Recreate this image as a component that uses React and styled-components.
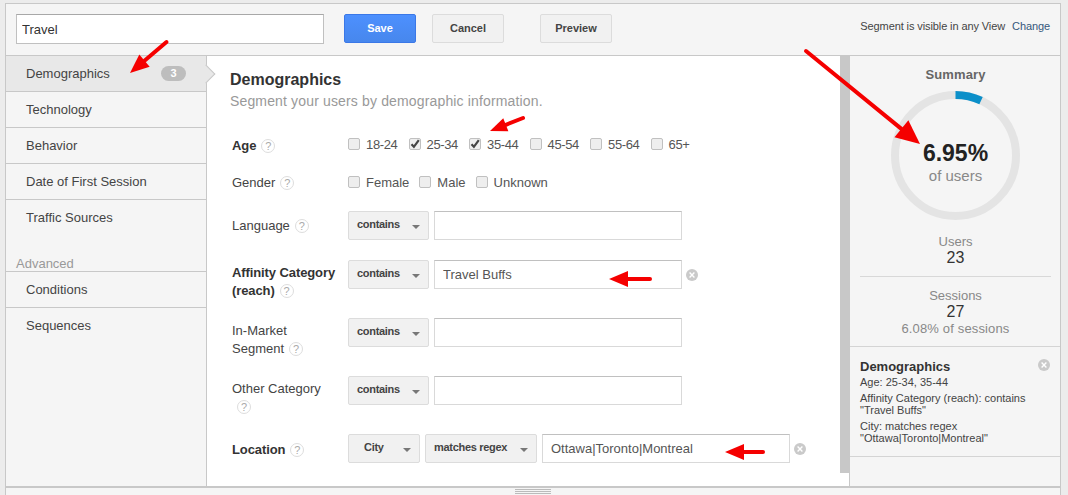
import React from 'react';
import styled, { createGlobalStyle } from 'styled-components';

const GlobalStyle = createGlobalStyle`
  html, body {
    margin: 0;
    padding: 0;
    background: #ececec;
    font-family: 'Liberation Sans', Arial, sans-serif;
    color: #444;
    overflow: hidden;
  }
`;

const Page = styled.div`
  position: relative;
  width: 1068px;
  height: 495px;
  padding: 3px 7px 0 5px;
  box-sizing: border-box;
`;

const Panel = styled.div`
  width: 1056px;
  height: 492px;
  box-sizing: border-box;
  border: solid #c8c8c8;
  border-width: 1px 1px 0 1px;
  background: #f5f5f5;
  display: flex;
  flex-direction: column;
`;

const TopBar = styled.div`
  height: 52px;
  flex: none;
  box-sizing: border-box;
  border-bottom: 1px solid #c8c8c8;
  padding: 10px 10px 0 10px;
  display: flex;
  align-items: flex-start;
`;

const NameInput = styled.input`
  width: 308px;
  height: 30px;
  box-sizing: border-box;
  border: 1px solid #c0c0c0;
  border-top-color: #a8a8a8;
  padding: 0 5px;
  font: 13px 'Liberation Sans', Arial, sans-serif;
  color: #333;
  background: #fff;
  outline: none;
`;

const Button = styled.button`
  width: 72px;
  height: 29px;
  margin-left: ${(p) => p.$left}px;
  box-sizing: border-box;
  border-radius: 2px;
  border: 1px solid ${(p) => (p.$primary ? '#3b78e7' : '#dcdcdc')};
  background: ${(p) => (p.$primary ? 'linear-gradient(#4d90fe, #4787ed)' : '#f1f1f1')};
  color: ${(p) => (p.$primary ? '#fff' : '#444')};
  font: bold 11px 'Liberation Sans', Arial, sans-serif;
  padding: 0 0 2px;
`;

const Visibility = styled.div`
  margin-left: auto;
  padding-top: 6px;
  font-size: 11px;
  line-height: 13px;
  letter-spacing: -0.1px;
  color: #444;
  display: flex;
  gap: 7px;
`;

const ChangeLink = styled.span`
  color: #35587c;
`;

const Body = styled.div`
  flex: 1;
  min-height: 0;
  display: flex;
`;

const Sidebar = styled.nav`
  width: 201px;
  flex: none;
  box-sizing: border-box;
  border-right: 1px solid #c8c8c8;
`;

const NavItem = styled.div`
  position: relative;
  height: 36px;
  box-sizing: border-box;
  padding-left: 20px;
  font-size: 13px;
  line-height: 35px;
  color: #444;
  background: ${(p) => (p.$active ? '#e8e8e8' : 'transparent')};
  border-bottom: ${(p) => (p.$last ? 'none' : '1px solid #c8c8c8')};
`;

const Badge = styled.span`
  position: absolute;
  right: 20px;
  top: 10px;
  width: 25px;
  height: 15px;
  border-radius: 8px;
  background: #bdbdbd;
  color: #fff;
  font-size: 11px;
  font-weight: bold;
  line-height: 15px;
  text-align: center;
`;

const Pointer = styled.span`
  position: absolute;
  right: -7px;
  top: 11px;
  width: 13px;
  height: 13px;
  background: #e8e8e8;
  border: solid #c8c8c8;
  border-width: 1px 1px 0 0;
  transform: rotate(45deg) scale(0.95);
  z-index: 2;
`;

const NavHeading = styled.div`
  margin-top: 19px;
  height: 17px;
  box-sizing: border-box;
  padding-left: 10px;
  font-size: 13px;
  line-height: 17px;
  color: #999;
  border-bottom: 1px solid #c8c8c8;
`;

const Main = styled.main`
  position: relative;
  flex: 1;
  min-width: 0;
  background: #fff;
  padding: 14px 0 0 23px;
`;

const Thumb = styled.div`
  position: absolute;
  top: 0;
  right: 0;
  width: 9px;
  height: 417px;
  background: #c8c8c8;
`;

const Title = styled.h2`
  margin: 0;
  font-size: 16px;
  line-height: 20px;
  font-weight: bold;
  color: #333;
`;

const Subtitle = styled.p`
  margin: 2px 0 0;
  font-size: 14px;
  line-height: 18px;
  letter-spacing: 0.15px;
  color: #999;
`;

const Row = styled.div`
  display: flex;
  align-items: ${(p) => (p.$top ? 'flex-start' : 'center')};
  height: ${(p) => p.$height}px;
  margin-top: ${(p) => p.$gap}px;
`;

const Label = styled.div`
  width: 119px;
  flex: none;
  box-sizing: border-box;
  padding: ${(p) => p.$pad || 0}px 8px 0 2px;
  font-size: 13px;
  line-height: 18px;
  font-weight: ${(p) => (p.$bold ? 'bold' : 'normal')};
  letter-spacing: ${(p) => (p.$bold ? '-0.1px' : '0')};
  color: ${(p) => (p.$bold ? '#333' : '#444')};
`;

const Help = styled.span`
  display: inline-block;
  width: 12px;
  height: 12px;
  margin-left: 5px;
  border: 1px solid #ddd;
  border-radius: 50%;
  color: #aaa;
  font-size: 11px;
  font-weight: normal;
  line-height: 12px;
  letter-spacing: 0;
  text-align: center;
  vertical-align: 0;
`;

const Checks = styled.div`
  display: flex;
  gap: ${(p) => p.$gap}px;
  margin-left: -1px;
`;

const Check = styled.label`
  display: flex;
  align-items: center;
  gap: ${(p) => p.$gap}px;
  font-size: 13px;
  line-height: 16px;
  letter-spacing: ${(p) => (p.$tight ? '-0.35px' : '0')};
  color: #555;
`;

const Box = styled.span`
  width: 12px;
  height: 12px;
  box-sizing: border-box;
  margin-top: -2px;
  border: 1px solid #c0c0c0;
  border-radius: 2px;
  background: #eee;
  display: flex;
  align-items: center;
  justify-content: center;
`;

const Controls = styled.div`
  display: flex;
  align-items: center;
  gap: 5px;
`;

const Select = styled.div`
  position: relative;
  width: ${(p) => p.$width}px;
  height: 29px;
  box-sizing: border-box;
  border: 1px solid #dcdcdc;
  border-radius: 2px;
  background: #f1f1f1;
  padding-left: ${(p) => p.$pad}px;
  font-size: 11px;
  font-weight: bold;
  line-height: 24px;
  letter-spacing: -0.3px;
  color: #444;
  margin-left: -1px;
  & + & { margin-left: 0; }
  &::after {
    content: '';
    position: absolute;
    right: 8px;
    top: 13px;
    border: solid transparent;
    border-width: 4px 4px 0;
    border-top-color: #777;
  }
`;

const TextField = styled.input`
  width: 248px;
  height: 29px;
  box-sizing: border-box;
  border: 1px solid #d9d9d9;
  border-top-color: #c0c0c0;
  padding: 0 8px;
  font: 13px 'Liberation Sans', Arial, sans-serif;
  color: #555;
  background: #fff;
  outline: none;
`;

const Clear = styled.svg`
  width: 12px;
  height: 12px;
  flex: none;
  margin-left: -1px;
`;

const Summary = styled.aside`
  width: 211px;
  flex: none;
  box-sizing: border-box;
  border-left: 1px solid #c8c8c8;
  display: flex;
  flex-direction: column;
`;

const SummaryTop = styled.div`
  height: 291px;
  flex: none;
  box-sizing: border-box;
  border-bottom: 1px solid #d4d4d4;
  padding: 10px 9px 0 10px;
  text-align: center;
`;

const SummaryTitle = styled.div`
  font-size: 13px;
  line-height: 17px;
  letter-spacing: 0.1px;
  font-weight: bold;
  color: #666;
`;

const Ring = styled.div`
  position: relative;
  width: 129px;
  height: 129px;
  margin: 8px auto 0;
`;

const RingText = styled.div`
  position: absolute;
  inset: 0;
  padding-top: 14px;
  display: flex;
  flex-direction: column;
  align-items: center;
  justify-content: center;
`;

const Percent = styled.div`
  font-size: 23px;
  line-height: 26px;
  font-weight: bold;
  color: #222;
`;

const OfUsers = styled.div`
  font-size: 15px;
  line-height: 18px;
  color: #888;
  margin-top: 1px;
`;

const Stat = styled.div`
  padding: ${(p) => p.$pad};
  border-bottom: ${(p) => (p.$divider ? '1px solid #d8d8d8' : 'none')};
`;

const StatLabel = styled.div`
  font-size: 13px;
  line-height: 14px;
  color: #888;
`;

const StatNote = styled(StatLabel)`
  margin-top: 2px;
  letter-spacing: 0.15px;
`;

const StatValue = styled.div`
  font-size: 16px;
  line-height: 17px;
  color: #333;
`;

const Card = styled.div`
  position: relative;
  height: 110px;
  flex: none;
  box-sizing: border-box;
  border-bottom: 1px solid #d4d4d4;
  padding: 12px 10px 0;
`;

const CardTitle = styled.div`
  font-size: 13px;
  line-height: 16px;
  font-weight: bold;
  color: #333;
`;

const CardLine = styled.div`
  font-size: 11px;
  line-height: 12px;
  color: #444;
  margin-top: ${(p) => p.$gap}px;
`;

const CardClear = styled.svg`
  position: absolute;
  right: 10px;
  top: 12px;
  width: 12px;
  height: 12px;
`;

const Footer = styled.div`
  height: 9px;
  flex: none;
  box-sizing: border-box;
  border-top: 2px solid #c8c8c8;
  display: flex;
  justify-content: center;
  padding-top: 1px;
`;

const Grip = styled.div`
  width: 36px;
  height: 3px;
  margin-left: -1px;
  border-top: 1px solid #bbb;
  border-bottom: 1px solid #bbb;
  position: relative;
  &::after {
    content: '';
    position: absolute;
    left: 0;
    right: 0;
    top: 1px;
    height: 1px;
    background: #bbb;
  }
`;

const Overlay = styled.svg`
  position: absolute;
  left: 0;
  top: 0;
  width: 1068px;
  height: 495px;
  pointer-events: none;
  z-index: 5;
`;

const ClearIcon = ({ as: Comp = Clear }) => (
  <Comp viewBox="0 0 12 12">
    <circle cx="6" cy="6" r="6" fill="#cacaca" />
    <path d="M3.6 3.6l4.8 4.8M8.4 3.6l-4.8 4.8" stroke="#fff" strokeWidth="1.4" />
  </Comp>
);

const CheckItem = ({ label, checked, gap = 6, tight = true }) => (
  <Check $gap={gap} $tight={tight}>
    <Box>
      {checked && (
        <svg width="10" height="10" viewBox="0 0 10 10">
          <path d="M1.5 5.2l2.4 2.6L8.8 1.2" fill="none" stroke="#444" strokeWidth="2.2" />
        </svg>
      )}
    </Box>
    {label}
  </Check>
);

// head length/spread in px, tail to tip
const Arrow = ({ x1, y1, x2, y2, width = 4, head = 19, spread = 8 }) => {
  const a = Math.atan2(y2 - y1, x2 - x1);
  const bx = x2 - head * Math.cos(a);
  const by = y2 - head * Math.sin(a);
  const nx = -Math.sin(a) * spread;
  const ny = Math.cos(a) * spread;
  return (
    <g>
      <line x1={x1} y1={y1} x2={bx} y2={by} stroke="#f50000" strokeWidth={width} strokeLinecap="round" />
      <polygon points={`${x2},${y2} ${bx + nx},${by + ny} ${bx - nx},${by - ny}`} fill="#f50000" />
    </g>
  );
};

const App = () => (
  <Page>
    <GlobalStyle />
    <Panel>
      <TopBar>
        <NameInput defaultValue="Travel" />
        <Button $primary $left={20}>Save</Button>
        <Button $left={16}>Cancel</Button>
        <Button $left={36}>Preview</Button>
        <Visibility>
          <span>Segment is visible in any View</span>
          <ChangeLink>Change</ChangeLink>
        </Visibility>
      </TopBar>
      <Body>
        <Sidebar>
          <NavItem $active>
            Demographics
            <Badge>3</Badge>
            <Pointer />
          </NavItem>
          <NavItem>Technology</NavItem>
          <NavItem>Behavior</NavItem>
          <NavItem>Date of First Session</NavItem>
          <NavItem $last>Traffic Sources</NavItem>
          <NavHeading>Advanced</NavHeading>
          <NavItem>Conditions</NavItem>
          <NavItem $last>Sequences</NavItem>
        </Sidebar>
        <Main>
          <Thumb />
          <Title>Demographics</Title>
          <Subtitle>Segment your users by demographic information.</Subtitle>

          <Row $height={20} $gap={25}>
            <Label $pad={1} $bold>Age<Help>?</Help></Label>
            <Checks $gap={11}>
              <CheckItem label="18-24" />
              <CheckItem label="25-34" checked />
              <CheckItem label="35-44" checked />
              <CheckItem label="45-54" />
              <CheckItem label="55-64" />
              <CheckItem label="65+" />
            </Checks>
          </Row>

          <Row $height={20} $gap={18}>
            <Label>Gender<Help>?</Help></Label>
            <Checks $gap={10}>
              <CheckItem label="Female" tight={false} />
              <CheckItem label="Male" tight={false} />
              <CheckItem label="Unknown" tight={false} />
            </Checks>
          </Row>

          <Row $height={29} $gap={18}>
            <Label $pad={1}>Language<Help>?</Help></Label>
            <Controls>
              <Select $width={81} $pad={8}>contains</Select>
              <TextField />
            </Controls>
          </Row>

          <Row $top $height={29} $gap={20}>
            <Label $pad={4} $bold>Affinity Category<br />(reach)<Help>?</Help></Label>
            <Controls>
              <Select $width={81} $pad={8}>contains</Select>
              <TextField defaultValue="Travel Buffs" />
              <ClearIcon />
            </Controls>
          </Row>

          <Row $top $height={29} $gap={29}>
            <Label $pad={4}>In-Market<br />Segment<Help>?</Help></Label>
            <Controls>
              <Select $width={81} $pad={8}>contains</Select>
              <TextField />
            </Controls>
          </Row>

          <Row $top $height={29} $gap={29}>
            <Label $pad={4}>Other Category<br /><Help>?</Help></Label>
            <Controls>
              <Select $width={81} $pad={8}>contains</Select>
              <TextField />
            </Controls>
          </Row>

          <Row $height={29} $gap={29}>
            <Label $pad={2} $bold>Location<Help>?</Help></Label>
            <Controls>
              <Select $width={72} $pad={15}>City</Select>
              <Select $width={112} $pad={8}>matches regex</Select>
              <TextField defaultValue="Ottawa|Toronto|Montreal" />
              <ClearIcon />
            </Controls>
          </Row>
        </Main>
        <Summary>
          <SummaryTop>
            <SummaryTitle>Summary</SummaryTitle>
            <Ring>
              <svg width="129" height="129" viewBox="0 0 129 129">
                <circle cx="64.5" cy="64.5" r="60.5" fill="none" stroke="#e4e4e4" strokeWidth="8" />
                <circle
                  cx="64.5"
                  cy="64.5"
                  r="60.5"
                  fill="none"
                  stroke="#0b8fc9"
                  strokeWidth="8"
                  pathLength="100"
                  strokeDasharray="6.95 93.05"
                  transform="rotate(-90 64.5 64.5)"
                />
              </svg>
              <RingText>
                <Percent>6.95%</Percent>
                <OfUsers>of users</OfUsers>
              </RingText>
            </Ring>
            <Stat $pad="15px 0 10px" $divider>
              <StatLabel>Users</StatLabel>
              <StatValue>23</StatValue>
            </Stat>
            <Stat $pad="12px 0 0">
              <StatLabel>Sessions</StatLabel>
              <StatValue>27</StatValue>
              <StatNote>6.08% of sessions</StatNote>
            </Stat>
          </SummaryTop>
          <Card>
            <CardTitle>Demographics</CardTitle>
            <ClearIcon as={CardClear} />
            <CardLine $gap={1}>Age: 25-34, 35-44</CardLine>
            <CardLine $gap={4}>Affinity Category (reach): contains<br />"Travel Buffs"</CardLine>
            <CardLine $gap={4}>City: matches regex<br />"Ottawa|Toronto|Montreal"</CardLine>
          </Card>
        </Summary>
      </Body>
      <Footer>
        <Grip />
      </Footer>
    </Panel>
    <Overlay viewBox="0 0 1068 495">
      <Arrow x1={166.5} y1={42} x2={130} y2={73} />
      <Arrow x1={523} y1={118} x2={490} y2={131} head={17} spread={7} />
      <Arrow x1={806} y1={51} x2={920} y2={144} head={24} spread={11} />
      <Arrow x1={650} y1={279} x2={609} y2={279} />
      <Arrow x1={763} y1={452} x2={725} y2={452} />
    </Overlay>
  </Page>
);

export default App;
